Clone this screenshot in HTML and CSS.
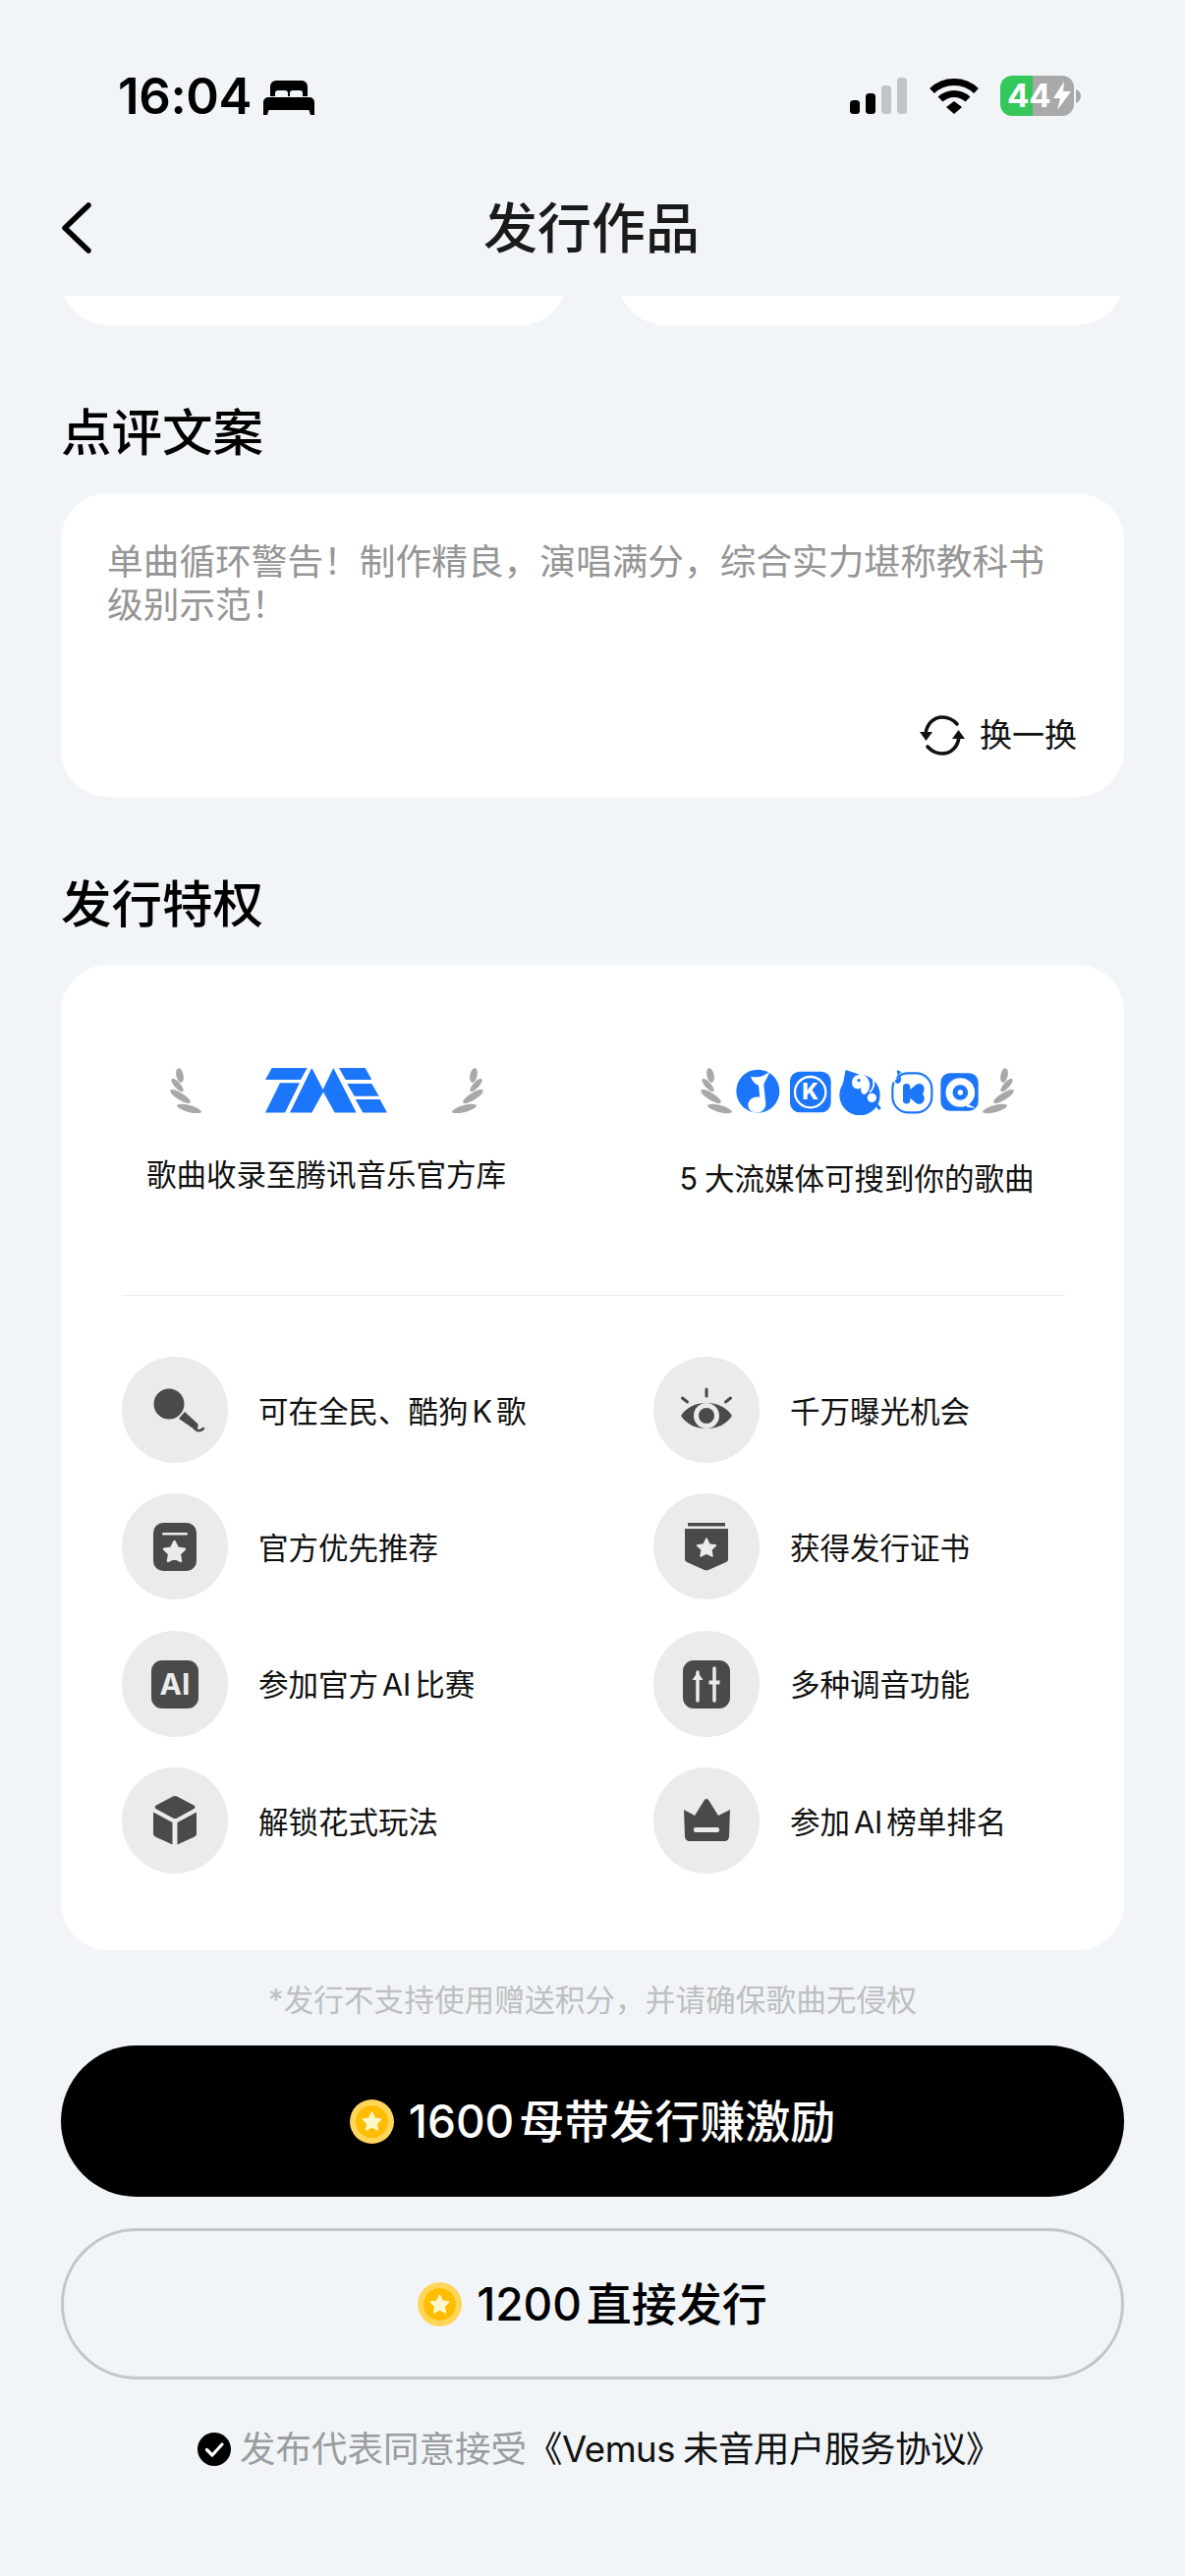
FILE: index.html
```html
<!DOCTYPE html>
<html lang="zh-CN">
<head>
<meta charset="utf-8">
<title>发行作品</title>
<link rel="stylesheet" href="styles.css">
</head>
<body>
<svg class="defs" width="0" height="0" aria-hidden="true">
  <defs>
    <g id="laurel">
      <ellipse cx="10" cy="7.5" rx="3.6" ry="7.5" transform="rotate(-12 10 7.5)"/>
      <ellipse cx="7.5" cy="17.5" rx="3" ry="8.5" transform="rotate(-42 7.5 17.5)"/>
      <ellipse cx="10.5" cy="29" rx="3.6" ry="12" transform="rotate(-58 10.5 29)"/>
      <ellipse cx="19.5" cy="41.5" rx="3.6" ry="12.8" transform="rotate(-75 19.5 41.5)"/>
    </g>
    <g id="coin">
      <circle cx="22.5" cy="22.5" r="22.5" fill="#ffd65a"/>
      <circle cx="22.5" cy="22.5" r="16.5" fill="#ffbd00"/>
      <polygon points="22.5,13.5 25.3,19.3 31.5,20.2 27,24.6 28.2,30.8 22.5,27.8 16.8,30.8 18,24.6 13.5,20.2 19.7,19.3" fill="#fff6c9" stroke="#fff6c9" stroke-width="1.8" stroke-linejoin="round"/>
    </g>
  </defs>
</svg>
<main class="app">
  <header class="status">
    <div class="status-left">
      <span class="time">16:04</span>
      <svg class="bed" width="52" height="35" viewBox="0 0 52 35"><path d="M7 16V6a6 6 0 0 1 6-6h26a6 6 0 0 1 6 6v10h-5v-3a3 3 0 0 0-3-3h-7a3 3 0 0 0-3 3v3h-2v-3a3 3 0 0 0-3-3h-7a3 3 0 0 0-3 3v3z" fill="#000"/><path d="M5 17h42a5 5 0 0 1 5 5v13h-4l-1.500-5H5.500L4 35H0V22a5 5 0 0 1 5-5z" fill="#000"/></svg>
    </div>
    <div class="status-right">
      <svg class="signal" width="58" height="37" viewBox="0 0 58 37"><rect y="23" width="10" height="14" rx="3.500" fill="#000"/><rect x="16" y="16" width="10" height="21" rx="3.500" fill="#000"/><rect x="32" y="8" width="10" height="29" rx="3.500" fill="#c1c5c7"/><rect x="48" width="10" height="37" rx="3.500" fill="#c1c5c7"/></svg>
      <svg class="wifi" width="50" height="37" viewBox="0 0 50 37"><path d="M2.500 13.500C15 1.500 35 1.500 47.500 13.500" fill="none" stroke="#000" stroke-width="7"/><path d="M11 22C19 14.500 31 14.500 39 22" fill="none" stroke="#000" stroke-width="7"/><polygon points="17,30 25,37 33,30 25,24" fill="#000"/></svg>
      <div class="battery">
        <div class="battery-body"><span class="battery-num">44</span><svg width="18" height="29" viewBox="0 0 18 29"><polygon points="11,0 0,17 7,17 4,29 18,10 10,10" fill="#fff"/></svg></div>
        <svg class="battery-nub" width="5" height="14" viewBox="0 0 5 14"><path d="M0 0c3 1 5 4 5 7s-2 6-5 7z" fill="#a9a9a9"/></svg>
      </div>
    </div>
  </header>

  <nav class="nav">
    <svg class="back" width="31" height="52" viewBox="0 0 31 52"><polyline points="28,3 4,26 28,49" fill="none" stroke="#000" stroke-width="5.500" stroke-linecap="round" stroke-linejoin="round"/></svg>
    <h1 class="nav-title">发行作品</h1>
  </nav>

  <div class="peek">
    <div class="peek-card"></div>
    <div class="peek-card"></div>
  </div>

  <h2 class="section-title">点评文案</h2>
  <section class="card copy-card">
    <p class="copy-text">单曲循环警告！制作精良，演唱满分，综合实力堪称教科书级别示范！</p>
    <div class="swap">
      <svg width="46" height="41" viewBox="0 0 46 41"><path d="M6 19C7 9 14 2 23 2c6 0 11 2.500 15 7" fill="none" stroke="#111" stroke-width="3.600" stroke-linecap="round"/><polygon points="0,17 13,17 6.500,26" fill="#111"/><path d="M40 22c-1 10-8 17-17 17-6 0-11-2.500-15-7" fill="none" stroke="#111" stroke-width="3.600" stroke-linecap="round"/><polygon points="33,24 46,24 39.500,15" fill="#111"/></svg>
      <span>换一换</span>
    </div>
  </section>

  <h2 class="section-title">发行特权</h2>
  <section class="card perks-card">
    <div class="awards">
      <div class="award">
        <svg class="award-logo" width="319" height="46" viewBox="0 0 319 46">
          <use href="#laurel" fill="#a8a8a8"/>
          <g transform="translate(97 0)" fill="#1b76fb">
            <polygon points="6.700,0 42.700,0 36,12 0,12"/>
            <polygon points="0,45.500 20,45.500 35,15.300 15,15.300"/>
            <polygon points="47.300,0 58.700,22 69.300,0 92.700,45.500 70.700,45.500 59,24.500 47.300,45.500 25,45.500"/>
            <polygon points="75,0 101.700,0 108.300,12 81.700,12"/>
            <polygon points="83.300,16 108.300,16 115.700,28.700 90.700,28.700"/>
            <polygon points="91.700,32 116.700,32 124,45.500 99.300,45.500"/>
          </g>
          <use href="#laurel" fill="#a8a8a8" transform="translate(319 0) scale(-1 1)"/>
        </svg>
        <p class="award-text award-text-left">歌曲收录至腾讯音乐官方库</p>
      </div>
      <div class="award">
        <svg class="award-logo" width="319" height="48" viewBox="0 0 319 48">
          <use href="#laurel" fill="#a8a8a8"/>
          <g transform="translate(31 -3) scale(0.3333)">
            <circle cx="82" cy="80" r="66" fill="#1b76fb"/>
            <path d="M60 35C80 40 105 35 118 18C115 35 105 45 100 60L106 120C106 135 92 146 78 146C62 146 52 134 52 122C52 106 68 96 88 98L84 62C72 58 64 48 60 35Z" fill="#fff"/>
            <rect x="180" y="20" width="125" height="125" rx="30" fill="#1b76fb"/>
            <circle cx="242" cy="83" r="47" fill="none" stroke="#fff" stroke-width="7"/>
            <text class="logo-k" x="242" y="106" text-anchor="middle">K</text>
          </g>
          <g transform="translate(136 -3) scale(0.3333)">
            <circle cx="78" cy="92" r="62" fill="#1b76fb"/>
            <polygon points="35,15 25,65 80,30" fill="#1b76fb"/>
            <path d="M80 30C60 28 52 45 55 60C58 75 75 75 82 70C80 80 84 90 92 90C105 85 110 70 108 55C105 40 95 30 80 30Z" fill="#fff"/>
            <circle cx="75" cy="47" r="5" fill="#1b76fb"/>
            <path d="M112 30C124 48 124 68 108 84" fill="none" stroke="#fff" stroke-width="5"/>
            <circle cx="115" cy="100" r="14" fill="#fff"/>
            <path d="M122 112L140 135" stroke="#1b76fb" stroke-width="9"/>
            <rect x="178" y="25" width="120" height="120" rx="48" fill="none" stroke="#1b76fb" stroke-width="6.500"/>
            <path d="M176 34L206 70" stroke="#fff" stroke-width="14"/>
            <path d="M192 15L206 22L197 28C204 38 208 46 200 54C193 60 184 54 186 47C188 42 194 41 197 42C197 34 190 26 192 15Z" fill="#1b76fb"/>
            <path d="M210 67C210 54 232 54 232 67V75L250 60C266 50 284 66 270 88C284 108 266 128 250 116L232 101V109C232 122 210 122 210 109Z" fill="#1b76fb"/>
            <rect x="325" y="25" width="115" height="115" rx="28" fill="#1b76fb"/>
            <circle cx="385" cy="84" r="34" fill="none" stroke="#fff" stroke-width="21"/>
            <circle cx="385" cy="84" r="8" fill="#fff"/>
            <path d="M402 116L432 132L405 128Z" fill="#fff"/>
          </g>
          <use href="#laurel" fill="#a8a8a8" transform="translate(319 0) scale(-1 1)"/>
        </svg>
        <p class="award-text award-text-right">5 大流媒体可搜到你的歌曲</p>
      </div>
    </div>
    <hr class="rule">
    <ul class="perks">
      <li class="perk">
        <svg class="perk-icon" width="108" height="108" viewBox="0 0 108 108"><circle cx="54" cy="54" r="54" fill="#ebebeb"/><circle cx="48" cy="48" r="15.500" fill="#4a4a4a"/><path d="M58 63l6-7 13 12c2 3-1 7-3 6z" fill="#4a4a4a"/><path d="M74 73c3 3 6 3 9 0" fill="none" stroke="#4a4a4a" stroke-width="2.500" stroke-linecap="round"/></svg>
        <span>可在全民、酷狗 K 歌</span>
      </li>
      <li class="perk">
        <svg class="perk-icon" width="108" height="108" viewBox="0 0 108 108"><circle cx="54" cy="54" r="54" fill="#ebebeb"/><path d="M54 33v7M29.500 42l5 4M78.500 42l-5 4" stroke="#4a4a4a" stroke-width="3" stroke-linecap="round"/><path d="M28 60c6-9 15-13 26-13s20 4 26 13c-6 9-15 13-26 13s-20-4-26-13z" fill="#4a4a4a"/><circle cx="54" cy="60" r="13" fill="#ebebeb"/><circle cx="54" cy="60" r="8" fill="#4a4a4a"/></svg>
        <span>千万曝光机会</span>
      </li>
      <li class="perk">
        <svg class="perk-icon" width="108" height="108" viewBox="0 0 108 108"><circle cx="54" cy="54" r="54" fill="#ebebeb"/><rect x="32" y="30" width="44" height="49" rx="10" fill="#4a4a4a"/><rect x="41" y="40" width="26" height="2.500" rx="1.200" fill="#ebebeb"/><polygon points="53.500,49 56.800,55.700 64,56.700 58.800,61.800 60,69 53.500,65.600 47,69 48.200,61.800 43,56.700 50.200,55.700" fill="#ebebeb" stroke="#ebebeb" stroke-width="2.500" stroke-linejoin="round"/></svg>
        <span>官方优先推荐</span>
      </li>
      <li class="perk">
        <svg class="perk-icon" width="108" height="108" viewBox="0 0 108 108"><circle cx="54" cy="54" r="54" fill="#ebebeb"/><rect x="35" y="30" width="38" height="3.500" fill="#4a4a4a"/><path d="M32 36h44v31c0 1.500-1 2.500-2 3l-18 8c-1.500.6-2.500.6-4 0l-18-8c-1-.5-2-1.500-2-3z" fill="#4a4a4a"/><polygon points="54,46 57,52 63.500,53 58.800,57.500 60,64 54,61 48,64 49.200,57.500 44.500,53 51,52" fill="#ebebeb" stroke="#ebebeb" stroke-width="1.500" stroke-linejoin="round"/></svg>
        <span>获得发行证书</span>
      </li>
      <li class="perk">
        <svg class="perk-icon" width="108" height="108" viewBox="0 0 108 108"><circle cx="54" cy="54" r="54" fill="#ebebeb"/><rect x="30" y="30" width="48" height="49" rx="11" fill="#4a4a4a"/><text class="perk-ai" x="54" y="65" text-anchor="middle">AI</text></svg>
        <span>参加官方 AI 比赛</span>
      </li>
      <li class="perk">
        <svg class="perk-icon" width="108" height="108" viewBox="0 0 108 108"><circle cx="54" cy="54" r="54" fill="#ebebeb"/><rect x="30" y="30" width="48" height="49" rx="11" fill="#4a4a4a"/><path d="M45 42v29M62 38v33" stroke="#ebebeb" stroke-width="3.500" stroke-linecap="round"/><path d="M39.500 50L45 42l5.500 8zM56.500 50.500h11v4h-11z" fill="#ebebeb"/></svg>
        <span>多种调音功能</span>
      </li>
      <li class="perk">
        <svg class="perk-icon" width="108" height="108" viewBox="0 0 108 108"><circle cx="54" cy="54" r="54" fill="#ebebeb"/><path d="M52 29.500c1.500-.8 2.800-.8 4.200 0l17 9c1.800 1 1.800 2.800 0 3.800l-17 9.200c-1.400.8-2.800.8-4.200 0l-17-9.200c-1.800-1-1.800-2.800 0-3.800z" fill="#4a4a4a"/><path d="M32 45.500l19.500 10.500v22.500L35 71c-2-1-3-2-3-4z" fill="#4a4a4a"/><path d="M76 45.500L56.500 56v22.500L73 71c2-1 3-2 3-4z" fill="#4a4a4a"/></svg>
        <span>解锁花式玩法</span>
      </li>
      <li class="perk">
        <svg class="perk-icon" width="108" height="108" viewBox="0 0 108 108"><circle cx="54" cy="54" r="54" fill="#ebebeb"/><path d="M31 43l11 6 10-16c1.200-1.500 2.800-1.500 4 0l10 16 12-6-1 27c0 3-2 5-5 5H37c-3 0-5-2-5-5z" fill="#4a4a4a"/><rect x="41" y="61" width="26" height="5" rx="2" fill="#ebebeb"/></svg>
        <span>参加 AI 榜单排名</span>
      </li>
    </ul>
  </section>

  <p class="note">*发行不支持使用赠送积分，并请确保歌曲无侵权</p>

  <button class="btn btn-primary" type="button">
    <svg width="45" height="45" viewBox="0 0 45 45"><use href="#coin"/></svg>
    <span class="btn-label">1600 母带发行赚激励</span>
  </button>
  <button class="btn btn-outline" type="button">
    <svg width="45" height="45" viewBox="0 0 45 45"><use href="#coin"/></svg>
    <span class="btn-label">1200 直接发行</span>
  </button>

  <footer class="agree">
    <svg width="34" height="34" viewBox="0 0 34 34"><circle cx="17" cy="17" r="17" fill="#000"/><polyline points="9.500,17.500 15,23 25,12" fill="none" stroke="#fff" stroke-width="3.200" stroke-linecap="round" stroke-linejoin="round"/></svg>
    <span class="agree-text"><span class="agree-muted">发布代表同意接受</span>《Vemus 未音用户服务协议》</span>
  </footer>
</main>
</body>
</html>
```

FILE: styles.css
```css
* { box-sizing: border-box; }
html, body { margin: 0; padding: 0; }
body {
  background: #f1f5f8;
  font-family: Inter, "Noto Sans CJK SC", sans-serif;
  color: #111;
  word-spacing: -0.11em;
}
.defs { position: absolute; }
.app {
  width: 1206px;
  height: 2622px;
  overflow: hidden;
  padding: 0 62px;
}

/* Status bar */
.status {
  height: 163px;
  margin: 0 -62px;
  padding: 77px 106px 0 120px;
  display: flex;
  justify-content: space-between;
  align-items: flex-start;
}
.status-left { display: flex; align-items: center; gap: 12px; height: 41px; }
.time { font-size: 51px; line-height: 41px; font-weight: 600; color: #000; letter-spacing: -0.4px; }
.bed { margin-top: 3px; }
.status-right { display: flex; align-items: flex-start; }
.signal { margin-top: 2px; margin-right: 23px; }
.wifi { margin-top: 2px; margin-right: 22px; }
.battery { display: flex; align-items: center; }
.battery-body {
  width: 75px;
  height: 41px;
  border-radius: 12px;
  background: linear-gradient(90deg, #34c85a 0 44%, #a9a9a9 44% 100%);
  display: flex;
  align-items: center;
  padding-left: 7px;
  gap: 2px;
}
.battery-num { font-size: 33px; font-weight: 700; line-height: 41px; color: #fff; }
.battery-nub { margin-left: 2px; }

/* Nav */
.nav {
  height: 138px;
  display: grid;
  grid-template-columns: 1fr auto 1fr;
  align-items: center;
}
.back { justify-self: start; }
.nav-title {
  margin: 0 0 1px -2px;
  font-size: 55px;
  line-height: 70px;
  font-weight: 500;
  color: #1a1a1a;
  grid-column: 2;
}

/* Peek of the scrolled-away cards */
.peek {
  height: 30px;
  overflow: hidden;
  display: flex;
  align-items: flex-end;
  gap: 52px;
}
.peek-card {
  flex: 1;
  height: 96px;
  flex-shrink: 0;
  background: #fff;
  border-radius: 48px;
}

.section-title {
  margin: 73px 0 25px;
  font-size: 51.5px;
  line-height: 72px;
  font-weight: 500;
  color: #000;
  padding-bottom: 1px;
}
.card { background: #fff; border-radius: 48px; }

/* Copy card */
.copy-card {
  height: 309px;
  padding: 48px 48px 38px 47px;
  display: flex;
  flex-direction: column;
  justify-content: space-between;
}
.copy-text { margin: 0; font-size: 36.7px; line-height: 44px; color: #959595; }
.swap { display: flex; justify-content: flex-end; align-items: center; gap: 15px; height: 50px; }
.swap span { font-size: 33px; color: #111; line-height: 50px; }

/* Perks card */
.perks-card { height: 1003px; padding: 105px 60px 78px 62px; }
.awards { display: grid; grid-template-columns: 416px 424px; column-gap: 120px; }
.award { display: flex; flex-direction: column; align-items: center; }
.award-logo { display: block; }
.award-text { margin: 0; font-size: 30.5px; line-height: 40px; color: #111; }
.award-text-left { margin-top: 43px; }
.award-text-right { margin-top: 45px; }
.logo-k { font: 800 68px Inter, sans-serif; fill: #fff; }
.perk-ai { font: 700 30px Inter, sans-serif; fill: #ebebeb; }
.rule { margin: 98px 0 62px; border: 0; height: 1px; background: #ececec; }
.perks {
  list-style: none;
  margin: 0;
  padding: 0;
  display: grid;
  grid-template-columns: 541px 1fr;
  row-gap: 31.4px;
}
.perk {
  display: flex;
  align-items: center;
  gap: 31px;
  font-size: 30.5px;
  line-height: 40px;
  color: #111;
  word-spacing: -0.15em;
}
.perk span { padding-top: 3px; }
.perk-icon { flex-shrink: 0; }

.note { margin: 31px 0 26px; text-align: center; font-size: 30.7px; line-height: 40px; color: #bdbfc1; }

/* Buttons */
.btn {
  display: flex;
  width: 100%;
  height: 154px;
  align-items: center;
  justify-content: center;
  gap: 15px;
  border-radius: 77px;
  font-family: inherit;
  font-size: 46px;
  font-weight: 500;
  padding: 0;
  word-spacing: -0.16em;
}
.btn-label { padding-bottom: 6px; }
.btn-primary { background: #000; color: #fff; border: 0; }
.btn-outline { margin-top: 32px; background: transparent; color: #000; border: 3px solid #c2c6c8; }

.agree {
  margin-top: 46px;
  height: 50px;
  padding-left: 14px;
  display: flex;
  justify-content: center;
  align-items: center;
  gap: 9px;
}
.agree-text { font-size: 36.5px; line-height: 50px; color: #111; letter-spacing: -0.5px; }
.agree-muted { color: #9a9d9f; letter-spacing: 0; }
```
